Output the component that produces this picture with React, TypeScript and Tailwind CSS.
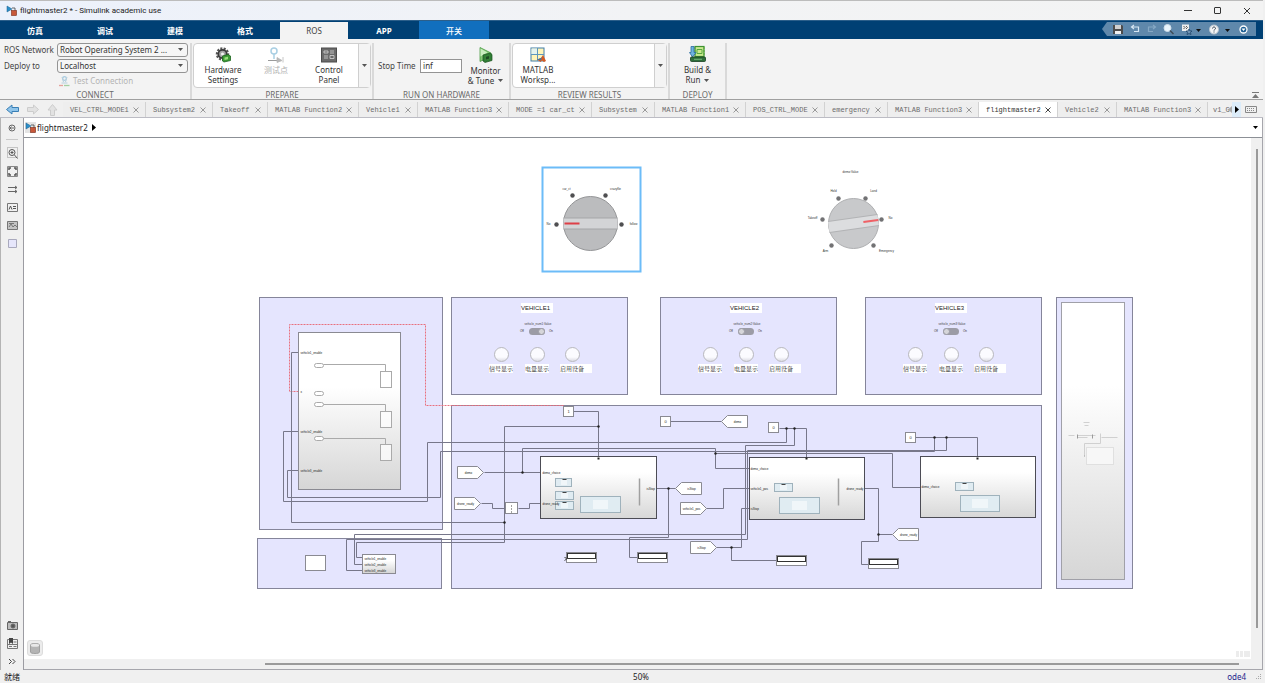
import React from 'react'

interface Point {
  x: number
  y: number
}

interface Rect extends Point {
  w: number
  h: number
}

// model coordinates of the top left corner of the visible canvas
const origin: Point = { x: 24, y: 138 }

const place = (r: Rect) => ({
  left: r.x - origin.x,
  top: r.y - origin.y,
  width: r.w,
  height: r.h,
})

const ribbonTabs = ['仿真', '调试', '建模', '格式', 'ROS', 'APP', '开关']

const docTabs = [
  'VEL_CTRL_MODE1',
  'Subsystem2',
  'Takeoff',
  'MATLAB Function2',
  'Vehicle1',
  'MATLAB Function3',
  'MODE =1 car_ct',
  'Subsystem',
  'MATLAB Function1',
  'POS_CTRL_MODE',
  'emergency',
  'MATLAB Function3',
  'flightmaster2',
  'Vehicle2',
  'MATLAB Function3',
]

const areas: Rect[] = [
  { x: 259, y: 297, w: 184, h: 233 },
  { x: 257, y: 538, w: 185, h: 51 },
  { x: 451, y: 405, w: 591, h: 184 },
  { x: 1056, y: 297, w: 77, h: 292 },
]

const vehicles = [
  { name: 'VEHICLE1', signal: 'vehicle_num1:Value', x: 451, on: true },
  { name: 'VEHICLE2', signal: 'vehicle_num2:Value', x: 660, on: false },
  { name: 'VEHICLE3', signal: 'vehicle_num3:Value', x: 865, on: false },
]

const wires = [
  'M298 352H291V522H504',
  'M362 557H356V542H504V426H598',
  'M298 431H283V501H427V442H786V428',
  'M298 470H287V497H440V451H934V437',
  'M362 564H354V534H745V445H794V428',
  'M362 570H346V539H747V450H946V437',
  'M573 411H598V457',
  'M484 472H540',
  'M522 472V448H715V468H749',
  'M715 453H892V487H920',
  'M481 503H492V508H505',
  'M518 508H529V503H540',
  'M656 488H675',
  'M668 488V537H629V557H637',
  'M706 508H723V488H749',
  'M716 547H741V508H749',
  'M731 547V560H777',
  'M670 421H721',
  'M779 428H806V458',
  'M915 437H977V457',
  'M864 488H878V541H861V564H869',
  'M878 534H892',
]

const junctions: number[][] = [
  [598, 426], [504, 522], [522, 472], [715, 453], [668, 488], [731, 547],
  [786, 428], [794, 428], [934, 437], [946, 437], [878, 534],
]

const constants = [
  { x: 563, y: 406, w: 11, h: 11, label: '1' },
  { x: 660, y: 416, w: 11, h: 11, label: '0' },
  { x: 768, y: 422, w: 11, h: 11, label: '0' },
  { x: 905, y: 432, w: 11, h: 11, label: '0' },
]

const displays: Rect[] = [
  { x: 566, y: 552, w: 31, h: 11 },
  { x: 637, y: 552, w: 31, h: 11 },
  { x: 776, y: 555, w: 31, h: 11 },
  { x: 868, y: 558, w: 31, h: 11 },
]

const tags = [
  { x: 457, y: 466, label: 'demo', flip: false },
  { x: 454, y: 497, label: 'drone_ready', flip: false },
  { x: 680, y: 502, label: 'vehicle1_pos', flip: false },
  { x: 690, y: 541, label: 'isStop', flip: false },
  { x: 675, y: 482, label: 'isStop', flip: true },
  { x: 721, y: 415, label: 'demo', flip: true },
  { x: 892, y: 528, label: 'drone_ready', flip: true },
]

const subsystems = [
  {
    box: { x: 540, y: 456, w: 117, h: 63 },
    minis: [
      { x: 555, y: 478, w: 17, h: 9 },
      { x: 555, y: 491, w: 19, h: 9 },
      { x: 555, y: 501, w: 19, h: 9 },
    ],
    large: { x: 580, y: 496, w: 41, h: 17 },
    bar: 639,
    port: 598,
    labels: [
      { x: 542, y: 473, text: 'demo_choice' },
      { x: 542, y: 504, text: 'drone_ready' },
      { x: 646, y: 489, text: 'isStop' },
    ],
  },
  {
    box: { x: 749, y: 457, w: 116, h: 63 },
    minis: [{ x: 774, y: 483, w: 19, h: 9 }],
    large: { x: 779, y: 497, w: 41, h: 17 },
    bar: 838,
    port: 806,
    labels: [
      { x: 750, y: 469, text: 'demo_choice' },
      { x: 750, y: 489, text: 'vehicle1_pos' },
      { x: 750, y: 509, text: 'isStop' },
      { x: 846, y: 489, text: 'drone_ready' },
    ],
  },
  {
    box: { x: 920, y: 456, w: 116, h: 62 },
    minis: [{ x: 955, y: 482, w: 19, h: 9 }],
    large: { x: 960, y: 495, w: 40, h: 17 },
    bar: null,
    port: 977,
    labels: [{ x: 921, y: 487, text: 'demo_choice' }],
  },
]

function Caret({ className = 'fill-[#555]' }: { className?: string }) {
  return (
    <svg width="5" height="3" viewBox="0 0 5 3" className={className}>
      <path d="M0 0h5L2.500 3z" />
    </svg>
  )
}

function ModelIcon() {
  return (
    <svg width="11" height="11" viewBox="0 0 11 11">
      <path d="M1 1l5 3-5 3z" fill="#2b8fc9" stroke="#1a5f8d" strokeWidth=".5" />
      <path d="M6 3h3v3" fill="none" stroke="#444" strokeWidth=".8" />
      <rect x="5.500" y="5.500" width="5" height="5" fill="#c8583a" stroke="#7a2d1b" strokeWidth=".6" />
    </svg>
  )
}

function GearIcon() {
  return (
    <svg width="16" height="16" viewBox="0 0 16 16">
      <circle cx="7.500" cy="7" r="5.500" fill="none" stroke="#555" strokeWidth="2.400" strokeDasharray="2 1.300" />
      <circle cx="7.500" cy="7" r="4.200" fill="#a6a6a6" stroke="#3b3b3b" strokeWidth="1.800" />
      <circle cx="7.500" cy="7" r="1.500" fill="#f4f4f4" />
      <path d="M7.500 9l5.500-1.500 2.500 1.500v4.500L9 15l-1.500-1z" fill="#3d9a34" stroke="#1d6420" strokeWidth=".8" />
      <path d="M9.500 10.500l3.500-.8v2.600l-3.500.8z" fill="#9be07e" />
    </svg>
  )
}

function TestPointIcon() {
  return (
    <svg width="16" height="16" viewBox="0 0 16 16" fill="none">
      <circle cx="6" cy="4" r="3" stroke="#a9cfe3" strokeWidth="1.500" />
      <path d="M6 7v5" stroke="#a9cfe3" strokeWidth="1.500" />
      <path d="M0 13.500h13" stroke="#9b9b9b" />
      <path d="M9 10.500l5 3-5 2zM15 10v5.500" fill="#b8b8b8" stroke="#b8b8b8" strokeWidth=".8" />
    </svg>
  )
}

function PanelIcon() {
  return (
    <svg width="16" height="16" viewBox="0 0 16 16">
      <rect x=".5" y="1" width="15" height="14" fill="#6b6b6b" stroke="#4c4c4c" />
      <path d="M3 4h4v2H3zM9 4h4M9 6h4M3 9h4M3 11h4M9 8.500h4v3H9z" fill="none" stroke="#d6d6d6" strokeWidth=".8" />
    </svg>
  )
}

function MonitorIcon() {
  return (
    <svg width="16" height="18" viewBox="0 0 16 18">
      <path d="M2 1.500v14l11-5V7z" fill="#86c977" stroke="#4a9a43" strokeWidth=".8" />
      <path d="M2.500 2.500l7 4-7 4z" fill="#c9edbf" />
      <path d="M5 9l7-2 2 1.500v6L7 16.500 5 15z" fill="#2f7e35" stroke="#1b5220" strokeWidth=".7" />
      <path d="M7.500 10.500l4-1v3.500l-4 1z" fill="#1c4a22" stroke="#4c9a46" strokeWidth=".5" />
    </svg>
  )
}

function WorkspaceIcon() {
  return (
    <svg width="16" height="16" viewBox="0 0 16 16">
      <rect x="1" y="1" width="13" height="13" fill="#fff4b8" stroke="#3f7da8" />
      <path d="M1.500 1.500h6v6h-6z" fill="#e4f2ee" />
      <path d="M7.500 1v13M1 7.500h13" stroke="#5d97bd" />
      <path d="M7 12.500l4-1.500 2-3 3 6-2 1-2-1.500-1.500 1.500z" fill="#d35a24" />
      <path d="M7 12.500l4-1.500 1-1.500-1 4z" fill="#3c77a8" />
    </svg>
  )
}

function BuildIcon() {
  return (
    <svg width="18" height="18" viewBox="0 0 18 18">
      <rect x="6" y="1.500" width="9" height="10" fill="#c9e98f" stroke="#3f9231" strokeWidth="1.200" />
      <path d="M8 4.500h5v4H8zM5 3h2M5 6h2M5 9h2M14 3h2M14 6h2M14 9h2" fill="none" stroke="#57a83f" />
      <path d="M2 1.500h3v6h2L3.500 12 0.500 7.500H2z" fill="#6fb4e0" stroke="#2b6c9e" strokeWidth=".8" />
      <rect x="1.500" y="12" width="15" height="4.500" rx="1" fill="#2f6f3b" stroke="#173f20" strokeWidth=".8" />
      <path d="M5 14.300h8" stroke="#7cc07f" strokeWidth=".9" />
    </svg>
  )
}

function ConnectionIcon() {
  return (
    <svg width="11" height="11" viewBox="0 0 11 11" fill="none">
      <circle cx="5.500" cy="2.500" r="1.800" stroke="#a9cbe0" strokeWidth="1.200" />
      <path d="M3 1l1.500 5M8 1L6.500 6M2.500 7h6" stroke="#b4cfdd" />
      <path d="M0 9.500h4" stroke="#e5a29c" strokeWidth="1.300" />
      <path d="M5 9.500h5.500" stroke="#a2cfa2" strokeWidth="1.300" />
    </svg>
  )
}

function Section({ title, className, children }: { title: string; className?: string; children: React.ReactNode }) {
  return (
    <section className={`flex shrink-0 flex-col border-r-2 border-[#d9d9d9] ${className ?? ''}`}>
      <div className="h-[45px] shrink-0">{children}</div>
      <h2 className="text-center text-[8px] leading-[14px] text-[#6a6a6a]">{title}</h2>
    </section>
  )
}

interface ToolButtonProps {
  icon: React.ReactNode
  lines: string[]
  menu?: boolean
  disabled?: boolean
  className?: string
}

function ToolButton({ icon, lines, menu, disabled, className }: ToolButtonProps) {
  return (
    <button
      disabled={disabled}
      className={`flex flex-col items-center text-[8px] leading-[10px] whitespace-nowrap text-[#333] disabled:text-[#b0b0b0] ${className ?? ''}`}
    >
      <span className="mb-[2px]">{icon}</span>
      {lines.map((line, i) => (
        <span key={line} className="flex items-center gap-1">
          {line}
          {menu && i === lines.length - 1 ? <Caret /> : null}
        </span>
      ))}
    </button>
  )
}

function Gallery({ children }: { children: React.ReactNode }) {
  return (
    <div className="flex h-[45px] rounded-sm border border-[#cfcfcf] bg-white">
      <div className="flex flex-1 items-start pt-[3px]">{children}</div>
      <button aria-label="More" className="flex w-3 items-center justify-center border-l border-[#cfcfcf] bg-[#f4f4f4]">
        <Caret />
      </button>
    </div>
  )
}

function Picker({ id, label, value }: { id: string; label: string; value: string }) {
  return (
    <div className="flex h-[14px] items-center">
      <label htmlFor={id} className="w-[53px] shrink-0 whitespace-nowrap">{label}</label>
      <div className="relative flex-1">
        <select
          id={id}
          defaultValue={value}
          className="block h-[14px] w-full appearance-none rounded-[3px] border border-[#949494] bg-[#f6f6f6] pl-[2px] text-[8px] leading-[12px] text-[#333]"
        >
          <option>{value}</option>
        </select>
        <span className="pointer-events-none absolute top-[5px] right-[5px]">
          <Caret />
        </span>
      </div>
    </div>
  )
}

function TitleBar() {
  return (
    <header className="flex h-5 items-center border-t border-[#bcbcbc] bg-linear-to-r from-[#ecf1fb] via-[#f2f3f5] to-[#f3f3f3] pr-3 pl-[6px]">
      <ModelIcon />
      <h1 className="ml-[3px] font-['Roboto',sans-serif] text-[8px] text-[#222]">flightmaster2 * - Simulink academic use</h1>
      <div className="ml-auto flex items-center gap-[22px]">
        <button aria-label="Minimize" className="flex h-2 w-2 items-center">
          <span className="h-px w-full bg-[#333]" />
        </button>
        <button aria-label="Maximize" className="h-[7px] w-[7px] rounded-[1px] border border-[#333]" />
        <button aria-label="Close">
          <svg width="8" height="8" viewBox="0 0 8 8" stroke="#333">
            <path d="M1 1l6 6M7 1L1 7" />
          </svg>
        </button>
      </div>
    </header>
  )
}

function QuickAccess() {
  return (
    <svg width="155" height="15" viewBox="0 0 155 15" fill="none">
      <path d="M5 0h149v14H5L0 7z" fill="#5f88ab" />
      <path d="M11 3h9l1 1v8H11z" fill="#4c4c4c" />
      <path d="M13 3h6v4h-6z" fill="#d0d0d0" />
      <path d="M13 9h6v3h-6z" fill="#f0f0f0" />
      <path d="M32 3l-2.500 2L32 7M30 5h6.500v4.500H32" stroke="#d6e6f2" strokeWidth="1.200" />
      <path d="M51 3l2.500 2L51 7M53 5h-6.500v4.500H51" stroke="#86a8c4" strokeWidth="1.200" />
      <circle cx="65.500" cy="6" r="3.500" fill="#e9f4fb" stroke="#cfdfeb" />
      <path d="M68 8.500l3.500 3.500" stroke="#3f4c57" strokeWidth="1.500" />
      <path d="M80 2.500h7V9h-7z" fill="#eee" />
      <path d="M81.500 4l1.500 1.500L81.500 7M84 4l1.500 1.500L84 7" stroke="#333" strokeWidth=".8" />
      <path d="M87 7l1 2h2l-1.500 1.500.5 2-2-1-2 1 .5-2L84 9h2z" fill="#6f93b3" stroke="#173e63" strokeWidth=".7" />
      <path d="M94 7h5l-2.500 3z" fill="#111" />
      <circle cx="112" cy="7.500" r="4.500" fill="#f4f4f4" stroke="#b8c4cf" />
      <path d="M110.500 6.500c0-2 3-2 3 0 0 1-1.500 1-1.500 2M112 9.500v1" stroke="#345" />
      <path d="M123 7h5l-2.500 3z" fill="#111" />
      <circle cx="141.500" cy="7.500" r="3.500" fill="#1d5f93" stroke="#fff" strokeWidth="1.300" />
      <path d="M139.500 6.500h4l-2 2.500z" fill="#fff" />
    </svg>
  )
}

function RibbonTabs() {
  return (
    <nav className="flex h-[19px] items-end border-t border-[#2c5f8a] bg-[#004074]">
      {ribbonTabs.map((tab) => {
        const look =
          tab === 'ROS'
            ? 'h-[17px] w-[68px] mr-px bg-[#f3f3f3] text-[#444]'
            : tab === '开关'
              ? 'h-[18px] w-[70px] bg-[#116fbe] text-white font-medium'
              : 'h-[18px] w-[70px] text-white font-bold'
        return (
          <button key={tab} className={`text-[8px] leading-[17px] ${look}`}>{tab}</button>
        )
      })}
      <div className="mr-[6px] mb-[2px] ml-auto">
        <QuickAccess />
      </div>
    </nav>
  )
}

function Toolstrip() {
  return (
    <div className="flex h-[61px] border-b border-[#9f9f9f] bg-[#f3f3f3] pt-1 text-[8px] text-[#444]">
      <Section title="CONNECT" className="w-[192px]">
        <div className="flex flex-col gap-[2px] pr-[2px] pl-1">
          <Picker id="ros-network" label="ROS Network" value="Robot Operating System 2 ..." />
          <Picker id="deploy-to" label="Deploy to" value="Localhost" />
          <button disabled className="ml-[55px] flex h-3 items-center gap-[3px] text-[#b3b3b3]">
            <ConnectionIcon />
            Test Connection
          </button>
        </div>
      </Section>
      <Section title="PREPARE" className="w-[182px] px-[1px]">
        <Gallery>
          <ToolButton className="w-[58px]" icon={<GearIcon />} lines={['Hardware', 'Settings']} />
          <ToolButton className="w-12" disabled icon={<TestPointIcon />} lines={['测试点']} />
          <ToolButton className="w-[58px]" icon={<PanelIcon />} lines={['Control', 'Panel']} />
        </Gallery>
      </Section>
      <Section title="RUN ON HARDWARE" className="w-[137px]">
        <div className="flex h-[45px] items-center">
          <label htmlFor="stop-time" className="ml-1 w-[43px]">Stop Time</label>
          <input id="stop-time" defaultValue="inf" className="h-[14px] w-[42px] border border-[#949494] bg-white px-[2px] text-[8px] text-[#333]" />
          <ToolButton className="w-12" menu icon={<MonitorIcon />} lines={['Monitor', '& Tune']} />
        </div>
      </Section>
      <Section title="REVIEW RESULTS" className="w-[159px] px-[1px]">
        <Gallery>
          <ToolButton className="w-[50px]" icon={<WorkspaceIcon />} lines={['MATLAB', 'Worksp...']} />
        </Gallery>
      </Section>
      <Section title="DEPLOY" className="w-[57px]">
        <ToolButton className="w-full pt-[2px]" menu icon={<BuildIcon />} lines={['Build &', 'Run']} />
      </Section>
      <button aria-label="Collapse toolstrip" className="mr-1 ml-auto self-end">
        <svg width="7" height="7" viewBox="0 0 7 7" fill="#777">
          <path d="M0 0h7v1H0zM3.500 2L7 6H0z" />
        </svg>
      </button>
    </div>
  )
}

function DocTabs() {
  return (
    <div className="flex h-[18px] items-end border-b border-[#bcbcc4] bg-[#f0f0f0]">
      <div className="flex h-full w-[63px] shrink-0 items-center gap-2 pt-[2px] pl-[6px]">
        <button aria-label="Back">
          <svg width="13" height="11" viewBox="0 0 13 11">
            <path d="M.5 5.500L6 1v2.500h6.500v4H6V10z" fill="#8fc4ea" stroke="#3a7fb5" />
          </svg>
        </button>
        <button aria-label="Forward" disabled>
          <svg width="12" height="11" viewBox="0 0 12 11">
            <path d="M11.500 5.500L6.500 1v2.500H.5v4h6V10z" fill="#e2e2e2" stroke="#ccc" />
          </svg>
        </button>
        <button aria-label="Up" disabled>
          <svg width="11" height="12" viewBox="0 0 11 12">
            <path d="M5.500.5L10 6H7.500v5.500h-4V6H1z" fill="#e2e2e2" stroke="#ccc" />
          </svg>
        </button>
      </div>
      <div className="relative flex min-w-0 flex-1 overflow-hidden font-['Liberation_Mono',monospace] text-[7px] whitespace-pre text-[#6b6b6b]">
        {docTabs.map((tab, i) => (
          <div
            key={i}
            style={{ width: tab.length * 4 + 27 }}
            className={`flex h-[15px] shrink-0 items-center border-r border-[#d2d2d2] pl-[7px] ${tab === 'flightmaster2' ? 'bg-white text-[#333]' : 'bg-[#eeeeee]'}`}
          >
            <button className="pt-[2px]">{tab}</button>
            <button aria-label={`Close ${tab}`} className="mr-[6px] ml-auto">
              <svg width="6" height="6" viewBox="0 0 6 6" stroke={tab === 'flightmaster2' ? '#444' : '#999'}>
                <path d="M.5.5l5 5M5.500.5l-5 5" />
              </svg>
            </button>
          </div>
        ))}
        <button className="h-[15px] shrink-0 pt-[2px] pl-[5px]">v1_G</button>
        <button aria-label="Scroll tabs left" disabled className="absolute top-1 right-0">
          <svg width="4" height="7" viewBox="0 0 4 7" fill="#aaa">
            <path d="M4 0v7L0 3.500z" />
          </svg>
        </button>
      </div>
      <div className="flex h-[15px] shrink-0 items-center">
        <button aria-label="Scroll tabs right" className="flex h-[15px] w-[9px] items-center justify-center bg-[#dcecf9]">
          <svg width="4" height="7" viewBox="0 0 4 7">
            <path d="M0 0v7l4-3.500z" />
          </svg>
        </button>
        <button aria-label="Keyboard" className="mr-[6px] ml-1">
          <svg width="12" height="7" viewBox="0 0 12 7" fill="none" stroke="#888">
            <path d="M.5.5h11v6H.5z" />
            <path d="M2 2.500h8M2 4.500h8" strokeDasharray="1 1" />
          </svg>
        </button>
      </div>
    </div>
  )
}

function Palette() {
  return (
    <aside className="flex w-6 shrink-0 flex-col items-center border-r border-l border-r-[#9c9ca2] border-l-[#b4b4b4] bg-[#f0f0f0] pt-[6px] pb-[3px]">
      <button aria-label="Hide browser">
        <svg width="8" height="8" viewBox="0 0 8 8" fill="none" stroke="#666">
          <circle cx="4" cy="4" r="3" />
          <path d="M2 4h4M3.500 2.500L2 4l1.500 1.500" />
        </svg>
      </button>
      <hr className="mt-[7px] w-3 border-[#c9c9c9]" />
      <div className="mt-[7px] flex flex-col items-center gap-[7px]">
        <button aria-label="Zoom">
          <svg width="11" height="12" viewBox="0 0 11 12" fill="none" stroke="#555">
            <path d="M.5.5h10v10H.5z" stroke="#999" strokeDasharray="1 1" />
            <circle cx="5" cy="5.500" r="3" />
            <path d="M7.500 8l3 3.500M3.500 5.500h3M5 4v3" />
          </svg>
        </button>
        <button aria-label="Fit to view">
          <svg width="11" height="11" viewBox="0 0 11 11" fill="none" stroke="#555">
            <path d="M.5.5h10v10H.5z" stroke="#888" />
            <path d="M4 2H2v2M7 2h2v2M2 7v2h2M9 7v2H7" strokeWidth="1.500" />
          </svg>
        </button>
        <button aria-label="Sample time">
          <svg width="11" height="11" viewBox="0 0 11 11" fill="none" stroke="#666">
            <path d="M1 3.500h9M1 7.500h9M8 2l2 1.500L8 5M8 6l2 1.500L8 9" />
          </svg>
        </button>
        <button aria-label="Annotation">
          <svg width="11" height="11" viewBox="0 0 11 11" fill="none" stroke="#555">
            <path d="M.5 1.500h10v8H.5z" stroke="#777" />
            <path d="M2 7.500L3.500 4 5 7.500M6 4.500h3M6 6.500h3" />
          </svg>
        </button>
        <button aria-label="Image">
          <svg width="11" height="11" viewBox="0 0 11 11" fill="#c4c4c4" stroke="#777">
            <path d="M.5 1.500h10v8H.5z" />
            <path d="M2 7l2-3 2 3 2-2 2 2M2 3.500h5" fill="none" />
          </svg>
        </button>
        <button aria-label="Area">
          <svg width="11" height="11" viewBox="0 0 11 11" fill="#e6e6fb" stroke="#a9a9bd">
            <path d="M1.500 1.500h8v8h-8z" />
          </svg>
        </button>
      </div>
      <div className="mt-auto flex flex-col items-center gap-[7px]">
        <button aria-label="Snapshot">
          <svg width="11" height="11" viewBox="0 0 11 11" fill="#bbb" stroke="#666">
            <path d="M.5 2.500h10v7H.5zM1 1.500h3" />
            <circle cx="6" cy="6" r="2" fill="#555" />
          </svg>
        </button>
        <button aria-label="Report">
          <svg width="11" height="11" viewBox="0 0 11 11" fill="none" stroke="#777">
            <path d="M.5 1.500h10v9H.5zM1 6.500h9M6.500 4h3M6.500 8.500h3M2 8.500h3" />
            <path d="M2 0h4v6L4 4.500 2 6z" fill="#444" stroke="none" />
          </svg>
        </button>
        <button aria-label="More tools">
          <svg width="8" height="11" viewBox="0 0 8 11" fill="none" stroke="#444">
            <path d="M1 3l2.500 2.500L1 8M4.500 3L7 5.500 4.500 8" />
          </svg>
        </button>
      </div>
    </aside>
  )
}

function VehiclePanel({ vehicle }: { vehicle: (typeof vehicles)[number] }) {
  const id = vehicle.name.toLowerCase()
  return (
    <section
      style={place({ x: vehicle.x, y: 297, w: 177, h: 98 })}
      className="absolute border border-[#85859a] bg-[#e5e5fe]"
    >
      <h3 className="mt-[5px] ml-[69px] h-[10px] w-8 bg-white text-[6px] leading-[10px] text-[#222]">{vehicle.name}</h3>
      <label htmlFor={id} className="mt-[8px] ml-[71px] block w-[30px] text-center text-[3px] leading-[6px] whitespace-nowrap text-[#444]">
        {vehicle.signal}
      </label>
      <div className="ml-[68px] flex h-[9px] items-center gap-1 text-[3px] text-[#333]">
        <span className="w-[5px]">Off</span>
        <span className="relative h-[7px] w-4">
          <input
            id={id}
            type="checkbox"
            role="switch"
            defaultChecked={vehicle.on}
            className="peer block h-[7px] w-4 appearance-none rounded-full bg-[#9c9ca6]"
          />
          <span className="pointer-events-none absolute top-0 left-0 h-[7px] w-[7px] rounded-full border border-[#9c9ca6] bg-[#d6d6da] peer-checked:left-[9px]" />
        </span>
        <span>On</span>
      </div>
      <div className="mt-[11px] flex pl-[37px] font-['Noto_Serif_CJK_SC','Noto_Sans_CJK_SC',serif] text-[6px] leading-[9px] text-[#222]">
        {['信号显示', '电量显示', '启用设备'].map((lamp, i) => (
          <div key={lamp} className={i === 1 ? 'w-[35px]' : 'w-9'}>
            <div className="ml-[5px] h-[15px] w-[15px] rounded-full border border-[#b9b9bd] bg-linear-to-b from-[#fbfbff] from-70% to-[#dcdce4]" />
            <p className={`mt-[2px] bg-white whitespace-nowrap ${i === 2 ? 'w-8' : 'w-6'}`}>{lamp}</p>
          </div>
        ))}
      </div>
    </section>
  )
}

interface KnobProps {
  center: Point
  r: number
  angle: number
  strong?: boolean
  dots: number[][]
  labels: { x: number; y: number; text: string }[]
}

function Knob({ center, r, angle, strong, dots, labels }: KnobProps) {
  const pointer = strong ? center.x - r + 1 : center.x + r - 15
  return (
    <g>
      <circle cx={center.x} cy={center.y} r={r} fill={strong ? '#bbbcbe' : '#c8c9cb'} stroke={strong ? '#949597' : '#aeafb1'} />
      <g transform={`rotate(${angle} ${center.x} ${center.y})`}>
        <rect x={center.x - r} y={center.y - 6} width={r * 2} height="12" fill={strong ? '#a5a6a8' : '#b2b3b5'} />
        <rect x={center.x - r} y={center.y - 5} width={r * 2} height="10" fill={strong ? '#d3d4d6' : '#dcdddf'} />
        <rect x={pointer} y={center.y - 1} width="15" height="2" fill={strong ? '#de3f47' : '#ef6166'} />
      </g>
      {dots.map(([x, y]) => (
        <circle key={`${x}-${y}`} cx={x} cy={y} r="2.200" fill={strong ? '#4f4f51' : '#727274'} />
      ))}
      {labels.map((l) => (
        <text key={l.text} x={l.x} y={l.y + 1} textAnchor="middle" className="fill-[#333] text-[3px]">{l.text}</text>
      ))}
    </g>
  )
}

function Subsystem({ block }: { block: (typeof subsystems)[number] }) {
  return (
    <>
      <div style={place(block.box)} className="absolute border border-[#4c4c55] bg-linear-to-b from-white from-25% to-[#d8d8d8]" />
      {[...block.minis, block.large].map((m, i) => (
        <div key={i} style={place(m)} className="absolute flex items-center justify-center border border-[#9fb2bc] bg-[#e0ecf2]">
          <span className="h-3/5 w-2/5 bg-[#f0f6f9]" />
        </div>
      ))}
    </>
  )
}

function Canvas() {
  return (
    <main className="relative min-w-0 flex-1 overflow-hidden bg-white font-['Liberation_Sans',Arial,sans-serif]">
      {areas.map((a, i) => (
        <div key={i} style={place(a)} className="absolute border border-[#85859a] bg-[#e5e5fe]" />
      ))}
      {vehicles.map((v) => (
        <VehiclePanel key={v.name} vehicle={v} />
      ))}

      <svg width="1226" height="521" viewBox="23.500 137.500 1226 521" className="pointer-events-none absolute top-0 left-0" fill="none">
        <path d="M298 391H289V324H425V405H563" stroke="#e8707f" strokeDasharray="2 1" />
        {wires.map((d) => (
          <path key={d} d={d} stroke="#77778a" />
        ))}
        {junctions.map(([x, y]) => (
          <circle key={`${x}-${y}`} cx={x} cy={y} r="1.200" fill="#222" />
        ))}
      </svg>

      <div style={place({ x: 298, y: 332, w: 103, h: 158 })} className="absolute border border-[#8a8a92] bg-linear-to-b from-white from-35% to-[#d6d6d6]" />
      <div style={place({ x: 305, y: 555, w: 21, h: 16 })} className="absolute border border-[#8a8a92] bg-white" />
      <div style={place({ x: 362, y: 554, w: 34, h: 20 })} className="absolute border border-[#8a8a92] bg-linear-to-b from-white from-30% to-[#d6d6d6]" />
      <div style={place({ x: 1061, y: 302, w: 64, h: 278 })} className="absolute border border-[#a0a0a8] bg-linear-to-b from-white from-30% to-[#d6d6d6]" />
      <div style={place({ x: 505, y: 502, w: 13, h: 12 })} className="absolute border border-[#8a8a92] bg-white" />
      {subsystems.map((s) => (
        <Subsystem key={s.box.x} block={s} />
      ))}
      {constants.map((c) => (
        <div key={c.x} style={place(c)} className="absolute flex items-center justify-center border border-[#8a8a92] bg-white text-[4px] leading-none text-[#333]">
          {c.label}
        </div>
      ))}
      {displays.map((d) => (
        <div key={d.x} style={place(d)} className="absolute border border-[#8a8a92] bg-white">
          <div className="h-[6px] border border-[#333]" />
        </div>
      ))}

      <svg width="1226" height="521" viewBox="23.500 137.500 1226 521" className="pointer-events-none absolute top-0 left-0" fill="none">
        {/* contents of the receiver subsystem */}
        <g stroke="#aaa">
          <path d="M323 364H385V371M323 404H385V411M323 438H385V444" />
          {[363, 391, 402, 436].map((y) => (
            <rect key={y} x="314" y={y} width="9" height="4" rx="2" fill="#fff" />
          ))}
          {[371, 411, 444].map((y) => (
            <rect key={y} x="380" y={y} width="11" height="16" fill="#fff" fillOpacity=".7" />
          ))}
        </g>
        <g className="fill-[#222] text-[3px]">
          <text x="300" y="353">vehicle1_enable</text>
          <text x="300" y="392">x</text>
          <text x="300" y="432">vehicle2_enable</text>
          <text x="300" y="471">vehicle3_enable</text>
          <text x="364" y="559">vehicle1_enable</text>
          <text x="364" y="565">vehicle2_enable</text>
          <text x="364" y="571">vehicle3_enable</text>
          {subsystems.flatMap((s) => s.labels).map((l) => (
            <text key={`${l.x}-${l.y}`} x={l.x} y={l.y}>{l.text}</text>
          ))}
        </g>
        {subsystems.map((s) => (
          <g key={s.port}>
            <path d={`M${s.port - 1} 458h2`} stroke="#222" strokeWidth="2" />
            {s.minis.map((m) => (
              <path key={m.y} d={`M${m.x + 7} ${m.y + 1}h4`} stroke="#444" />
            ))}
            {s.bar ? <path d={`M${s.bar} 478v27`} stroke="#a0a0a0" strokeWidth="1.500" /> : null}
          </g>
        ))}
        <path d="M511 505v1M511 508v1M511 511v1M564 557l3 1-3 2" stroke="#444" />

        {tags.map((t) => (
          <g key={`${t.x}-${t.y}`}>
            <path
              d={t.flip ? `M${t.x} ${t.y + 6}l6-6h20v12h-20z` : `M${t.x} ${t.y}h20l6 6-6 6h-20z`}
              fill="#fff"
              stroke="#8a8a92"
            />
            <text x={t.flip ? t.x + 16 : t.x + 11} y={t.y + 7} textAnchor="middle" className="fill-[#222] text-[3px]">{t.label}</text>
          </g>
        ))}

        {/* faint preview inside the tall subsystem */}
        <g stroke="#d0d0d0">
          <path d="M1083 422h6M1084 425h4M1068 435h6M1077 435h18M1077 437h10M1101 437h16M1100 433v10h-16v12" />
          <rect x="1086" y="447" width="27" height="17" fill="#f7f7f7" stroke="#e0e0e0" />
          <path d="M1077 434v4M1092 434v4M1084 455v1" stroke="#999" />
        </g>

        <rect x="542" y="167" width="98" height="104" stroke="#6cbcf8" strokeWidth="2" />
        <Knob
          center={{ x: 590, y: 223 }}
          r={27}
          angle={0}
          strong
          dots={[[556, 224], [572, 195], [605, 195], [621, 224]]}
          labels={[
            { x: 548, y: 223, text: 'No' },
            { x: 566, y: 188, text: 'car_ct' },
            { x: 615, y: 188, text: 'crazyflie' },
            { x: 633, y: 223, text: 'follow' },
          ]}
        />
        <Knob
          center={{ x: 853, y: 223 }}
          r={25}
          angle={-8}
          dots={[[838, 198], [865, 198], [822, 219], [881, 219], [831, 245], [873, 245]]}
          labels={[
            { x: 850, y: 171, text: 'demo:Value' },
            { x: 833, y: 190, text: 'Hold' },
            { x: 873, y: 190, text: 'Land' },
            { x: 812, y: 217, text: 'Takeoff' },
            { x: 890, y: 217, text: 'No' },
            { x: 825, y: 250, text: 'Arm' },
            { x: 886, y: 250, text: 'Emergency' },
          ]}
        />
      </svg>

      <button aria-label="Model data" className="absolute bottom-[3px] left-[3px] flex h-4 w-4 items-center justify-center rounded-[3px] border border-[#dcdcdc] bg-[#ececec]">
        <svg width="10" height="11" viewBox="0 0 10 11">
          <path d="M.5 2v7c0 2 9 2 9 0V2c0-2-9-2-9 0z" fill="#b4b4b4" stroke="#a0a0a0" />
          <ellipse cx="5" cy="2.200" rx="4.200" ry="1.500" fill="#e8e8e8" />
        </svg>
      </button>
      <div className="absolute right-[1px] bottom-[2px] flex gap-px">
        <span className="h-[6px] w-[3px] bg-[#ececec]" />
        <span className="h-[6px] w-[3px] bg-[#ececec]" />
        <span className="h-[6px] w-[6px] bg-[#ececec]" />
      </div>
    </main>
  )
}

function Editor() {
  return (
    <div className="flex min-w-0 flex-1 flex-col">
      <div className="flex h-5 shrink-0 items-center border-b border-[#8c9096] bg-white pr-1 pl-[1px] text-[8px] text-[#222]">
        <span className="bg-[#e4e4e4]">
          <ModelIcon />
        </span>
        <a href="#flightmaster2" className="mr-1 ml-px">flightmaster2</a>
        <svg width="4" height="7" viewBox="0 0 4 7">
          <path d="M0 0v7l4-3.500z" />
        </svg>
        <button aria-label="Model hierarchy" className="ml-auto">
          <Caret className="fill-black" />
        </button>
      </div>
      <div className="flex min-h-0 flex-1">
        <Canvas />
        <div className="flex w-[11px] shrink-0 flex-col items-center bg-[#f0f0f0] pt-[11px] pb-[31px]">
          <div className="w-[2px] flex-1 bg-[#9a9a9a]" />
        </div>
      </div>
      <div className="flex h-[11px] shrink-0 items-center border-b border-[#a6a6ac] bg-[#f0f0f0] pr-[23px] pl-[241px]">
        <div className="h-[2px] flex-1 bg-[#9a9a9a]" />
      </div>
    </div>
  )
}

export default function App() {
  return (
    <div className="flex h-screen flex-col overflow-hidden bg-[#f0f0f0] pr-[2px] font-['Noto_Sans','Noto_Sans_CJK_SC',sans-serif]">
      <TitleBar />
      <RibbonTabs />
      <Toolstrip />
      <DocTabs />
      <div className="flex min-h-0 flex-1 border-r border-[#a6a6ac]">
        <Palette />
        <Editor />
      </div>
      <footer className="flex h-[13px] shrink-0 items-center pl-1 text-[8px] text-[#222]">
        <span className="flex-1">就绪</span>
        <span className="flex-1 pl-4 text-center">50%</span>
        <span className="flex flex-1 items-center justify-end gap-[10px] pr-px text-[#26268c]">
          ode4
          <svg width="6" height="6" viewBox="0 0 6 6" fill="#aaa">
            <path d="M4 0h1v1H4zM4 2h1v1H4zM4 4h1v1H4zM2 2h1v1H2zM2 4h1v1H2zM0 4h1v1H0z" />
          </svg>
        </span>
      </footer>
    </div>
  )
}
